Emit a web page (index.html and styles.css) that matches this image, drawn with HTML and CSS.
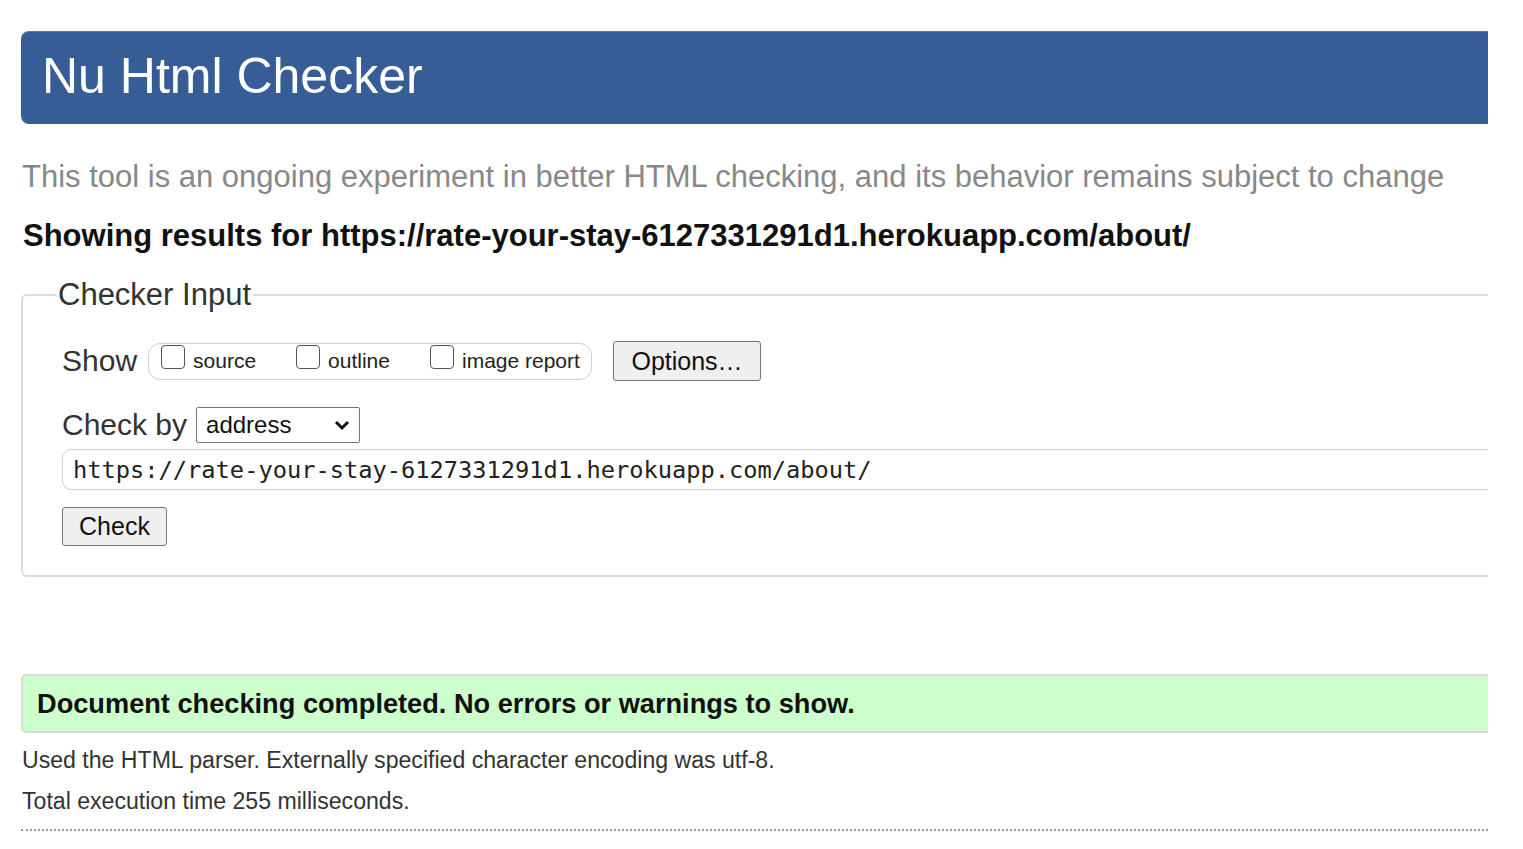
FILE: index.html
```html
<!DOCTYPE html>
<html lang="en">
<head>
<meta charset="utf-8">
<title>Nu Html Checker</title>
<link rel="stylesheet" href="styles.css">
</head>
<body>
<div class="page">
  <header class="banner"><h1 class="title">Nu Html Checker</h1></header>
  <p class="lede">This tool is an ongoing experiment in better HTML checking, and its behavior remains subject to change</p>
  <p class="showing">Showing results for https://rate-your-stay-6127331291d1.herokuapp.com/about/</p>
  <form class="checker-form">
    <fieldset class="input-box">
      <legend class="legend">Checker Input</legend>
      <div class="row show-row">
        <span class="lbl">Show</span>
        <span class="opts">
          <label class="opt"><span class="cb"></span>source</label>
          <label class="opt"><span class="cb"></span>outline</label>
          <label class="opt"><span class="cb"></span>image report</label>
        </span>
        <span class="btn options-btn">Options…</span>
      </div>
      <div class="row by-row">
        <span class="lbl">Check by</span>
        <span class="select">address
          <svg class="chev" width="16" height="12" viewBox="0 0 16 12"><path d="M2 3 L8 9 L14 3" fill="none" stroke="#111" stroke-width="3"/></svg>
        </span>
      </div>
      <div class="url">https://rate-your-stay-6127331291d1.herokuapp.com/about/</div>
      <span class="btn check-btn">Check</span>
    </fieldset>
  </form>
  <div class="success">Document checking completed. No errors or warnings to show.</div>
  <p class="details first">Used the HTML parser. Externally specified character encoding was utf-8.</p>
  <p class="details">Total execution time 255 milliseconds.</p>
  <div class="dotted"></div>
</div>
</body>
</html>
```
FILE: styles.css
```css
html, body {
  margin: 0;
  padding: 0;
  background: #fff;
}
body {
  font-family: "Liberation Sans", Arial, sans-serif;
  color: #222;
}
.page {
  margin-left: 21px;
  width: 1467px;
  overflow: hidden;
  padding-bottom: 12px;
}
.banner {
  margin-top: 31px;
  width: 1500px;
  height: 93px;
  box-sizing: border-box;
  background: #365d95;
  border-top: 1px solid #5a7aa8;
  border-radius: 8px;
  padding-left: 21px;
}
.title {
  margin: 0;
  font-weight: normal;
  font-size: 50px;
  line-height: 88px;
  color: #fff;
}
.lede {
  margin: 35px 0 0 1px;
  font-size: 31px;
  line-height: 36px;
  color: #888;
  white-space: nowrap;
}
.showing {
  margin: 23px 0 0 2px;
  font-size: 31px;
  line-height: 36px;
  font-weight: bold;
  color: #111;
  white-space: nowrap;
}
.checker-form {
  margin: 23px 0 0 0;
}
.input-box {
  margin: 0;
  width: 1520px;
  box-sizing: border-box;
  border: 2px solid #dcdcdc;
  border-radius: 6px;
  padding: 28px 0 29px 39px;
}
.legend {
  margin-left: -6px;
  padding: 0 2px;
  font-size: 31px;
  line-height: 36px;
  color: #333;
}
.row {
  display: flex;
  align-items: center;
}
.lbl {
  font-size: 30px;
  color: #333;
}
.show-row {
  height: 40px;
}
.opts {
  display: flex;
  align-items: center;
  margin-left: 11px;
  height: 37px;
  width: 444px;
  box-sizing: border-box;
  border: 1px solid #cfcfcf;
  border-radius: 12px;
  padding-left: 12px;
}
.opt {
  display: flex;
  align-items: center;
  font-size: 21px;
  color: #222;
}
.opt + .opt {
  margin-left: 40px;
}
.cb {
  display: inline-block;
  width: 22px;
  height: 22px;
  border: 1.5px solid #555;
  border-radius: 4px;
  margin-right: 8px;
  margin-top: -8px;
  background: #fff;
}
.btn {
  display: inline-flex;
  align-items: center;
  justify-content: center;
  box-sizing: border-box;
  background: #efefef;
  border: 1.5px solid #767676;
  border-radius: 3px;
  font-size: 25px;
  color: #111;
}
.options-btn {
  margin-left: 21px;
  width: 148px;
  height: 40px;
}
.by-row {
  margin-top: 26px;
  height: 36px;
}
.select {
  margin-left: 9px;
  width: 164px;
  height: 36px;
  box-sizing: border-box;
  border: 1.5px solid #767676;
  border-radius: 2px;
  display: flex;
  align-items: center;
  justify-content: space-between;
  padding: 0 9px 0 9px;
  font-size: 24px;
  color: #111;
}
.chev {
  display: block;
}
.url {
  margin-top: 6px;
  height: 41px;
  box-sizing: border-box;
  border: 1.5px solid #d0d0d0;
  border-radius: 9px;
  padding-left: 10px;
  font-family: "DejaVu Sans Mono", "Liberation Mono", monospace;
  font-size: 23.7px;
  line-height: 40px;
  color: #222;
  white-space: nowrap;
}
.check-btn {
  margin-top: 17px;
  width: 105px;
  height: 39px;
}
.success {
  margin-top: 97px;
  width: 1500px;
  height: 59px;
  box-sizing: border-box;
  background: #ccffcc;
  border: 2px solid #d8d8d8;
  border-radius: 5px;
  padding-left: 14px;
  font-weight: bold;
  font-size: 27.2px;
  line-height: 55px;
  color: #111;
  white-space: nowrap;
}
.details {
  margin: 0 0 0 1px;
  font-size: 23.1px;
  line-height: 41px;
  color: #333;
  white-space: nowrap;
}
.details.first {
  margin-top: 7px;
}
.dotted {
  margin-top: 7px;
  border-top: 2px dotted #999;
}
```
